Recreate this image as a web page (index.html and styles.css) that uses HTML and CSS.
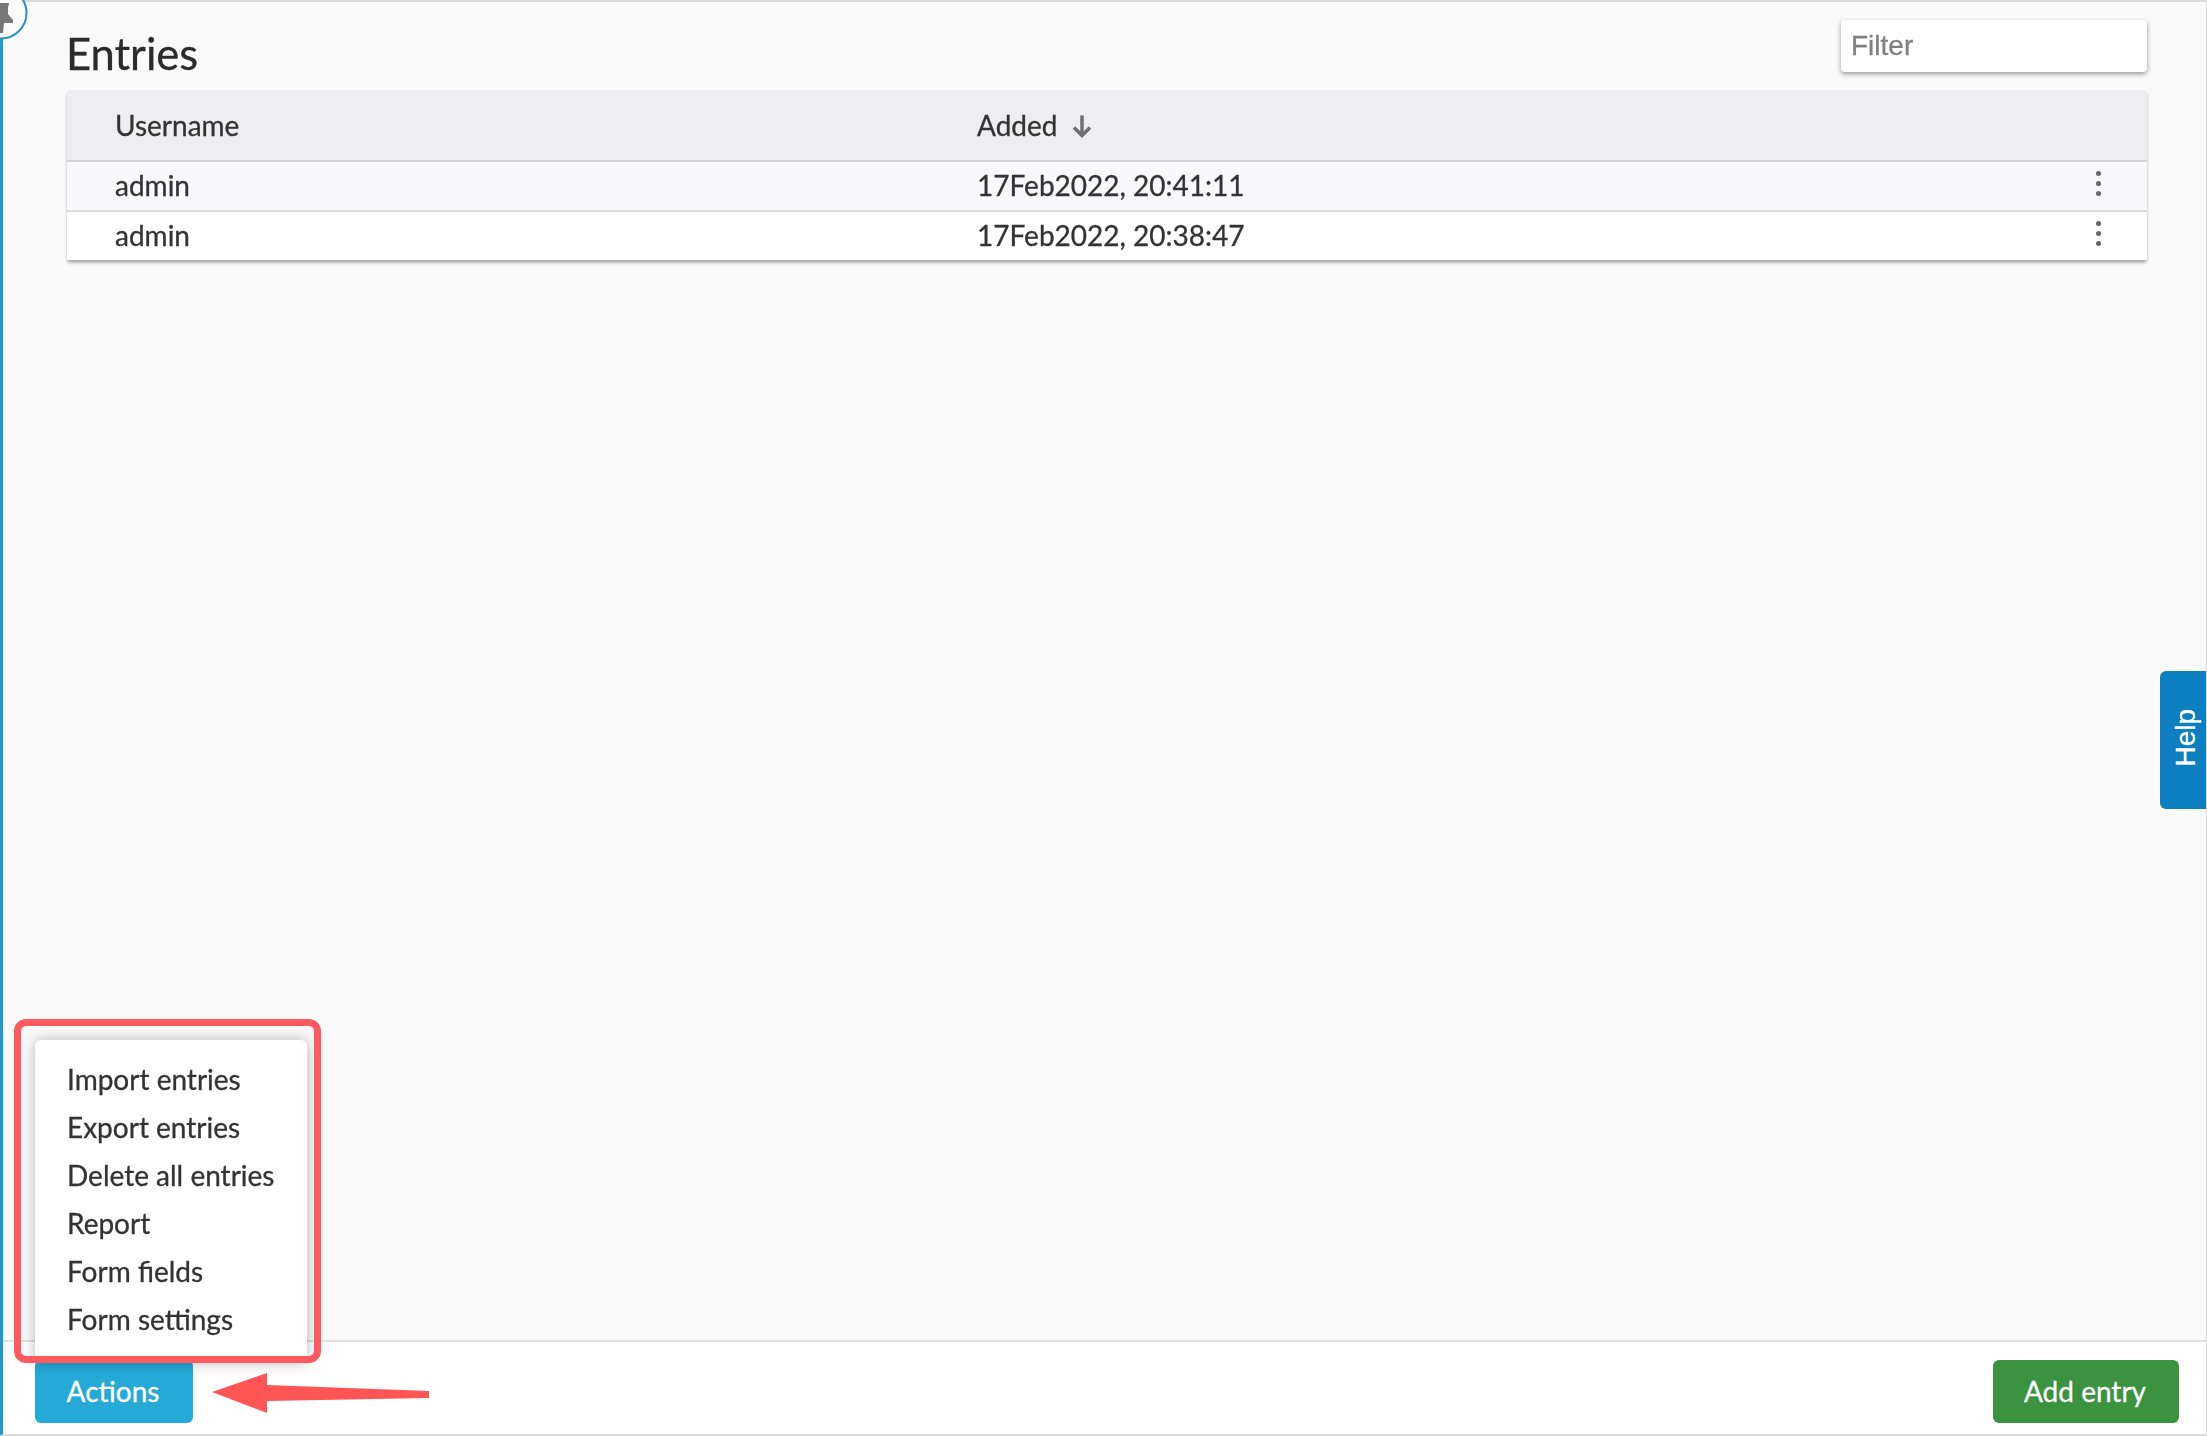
FILE: index.html
```html
<!DOCTYPE html>
<html lang="en">
<head>
<meta charset="utf-8">
<title>Entries</title>
<link rel="stylesheet" href="styles.css">
</head>
<body>
<div class="app">
  <main class="content">
    <header class="head">
      <h1 class="title">Entries</h1>
      <input class="filter" type="text" placeholder="Filter">
    </header>
    <section class="table">
      <div class="row row-head">
        <span>Username</span>
        <span class="sorted">Added
          <svg class="sort" viewBox="0 0 22 24" width="22" height="24" aria-hidden="true"><path d="M11 1.500V21M3 13.500L11 21.500L19 13.500" fill="none" stroke="#6f6f6f" stroke-width="3.500"/></svg>
        </span>
        <span></span>
      </div>
      <div class="row row-odd">
        <span>admin</span>
        <span>17Feb2022, 20:41:11</span>
        <span class="kebab"><i></i><i></i><i></i></span>
      </div>
      <div class="row row-even">
        <span>admin</span>
        <span>17Feb2022, 20:38:47</span>
        <span class="kebab"><i></i><i></i><i></i></span>
      </div>
    </section>
  </main>
  <footer class="foot">
    <div class="actions">
      <button class="btn btn-blue" type="button">Actions</button>
      <ul class="menu">
        <li>Import entries</li>
        <li>Export entries</li>
        <li>Delete all entries</li>
        <li>Report</li>
        <li>Form fields</li>
        <li>Form settings</li>
      </ul>
    </div>
    <button class="btn btn-green" type="button">Add entry</button>
  </footer>
</div>
<svg class="pin" viewBox="0 0 30 42" width="30" height="42" aria-hidden="true">
  <circle cx="1" cy="13" r="25.500" fill="#fbfbfb" stroke="#2a8fc6" stroke-width="2"/>
  <path d="M0 3H9L8 8L8 14L13 20V23H4L3 33H0Z" fill="#787878"/>
</svg>
<button class="help" type="button"><span>Help</span></button>
<div class="callout"></div>
<svg class="arrow" viewBox="0 0 230 44" width="230" height="44" aria-hidden="true">
  <path d="M2 21L57 2V14L219 20V27L57 30V42Z" fill="#ff5555"/>
</svg>
</body>
</html>
```
FILE: styles.css
```css
* { box-sizing: border-box; }
html, body { margin: 0; padding: 0; height: 100%; }
body {
  width: 2207px;
  height: 1436px;
  overflow: hidden;
  position: relative;
  background: #fafafa;
  font-family: Lato, "Liberation Sans", sans-serif;
  color: #333;
  -webkit-text-stroke: .3px;
}
.app, .pin, .help, .callout, .arrow { filter: blur(.5px); }
.app {
  height: 1436px;
  display: flex;
  flex-direction: column;
  border-top: 2px solid #dcdcdc;
  border-left: 3px solid #1f9ad0;
  border-right: 1px solid #dcdcdc;
  border-bottom: 2px solid #dcdcdc;
}
.content {
  flex: 1;
  padding: 18px 59px 0 64px;
}
.head {
  display: flex;
  justify-content: space-between;
  align-items: flex-start;
  height: 70px;
}
.title {
  margin: 7px 0 0 -1px;
  font-size: 43.500px;
  line-height: 52px;
  font-weight: 400;
  color: #2b2b2b;
}
.filter {
  width: 306px;
  height: 52px;
  padding: 0 10px;
  border: 0;
  border-radius: 4px;
  background: #fff;
  box-shadow: 0 2px 5px rgba(0, 0, 0, .4);
  font-family: "Liberation Sans", Arial, sans-serif;
  font-size: 28px;
}
.filter::placeholder { color: #808080; opacity: 1; }
.table {
  border-radius: 3px;
  box-shadow: 0 3px 3px rgba(0, 0, 0, .3);
}
.row {
  display: grid;
  grid-template-columns: 862px 1fr 52px;
  align-items: center;
  padding-left: 48px;
  font-size: 28px;
  height: 50px;
  border-bottom: 2px solid #dcdcde;
}
.row span:not(.kebab) { position: relative; top: -1px; }
.row-head {
  height: 72px;
  background: #eeeef2;
  border-radius: 3px 3px 0 0;
  border-bottom: 2px solid #d4d4d6;
}
.row-head span:not(.kebab) { top: 0; }
.row-odd { background: #f9f9fb; }
.row-even { background: #fff; border-bottom: 0; height: 48px; }
.sorted { display: flex; align-items: center; gap: 14px; }
.sort { margin-top: 2px; }
.kebab {
  display: flex;
  flex-direction: column;
  align-items: center;
  gap: 5px;
  width: 6px;
  margin-top: -5px;
}
.kebab i {
  width: 5px;
  height: 5px;
  border-radius: 50%;
  background: #666;
}
.foot {
  height: 94px;
  display: flex;
  justify-content: space-between;
  align-items: flex-start;
  padding: 18px 27px 0 32px;
  background: #fff;
  border-top: 2px solid #e0e0e0;
}
.actions { position: relative; }
.btn {
  height: 63px;
  padding: 0 2px 2px 0;
  border: 0;
  border-radius: 6px;
  color: #fff;
  font-family: inherit;
  font-size: 28px;
  -webkit-text-stroke: .3px #fff;
}
.btn-blue { width: 158px; background: #25a9d6; }
.btn-green { width: 186px; background: #3b923f; }
.menu {
  position: absolute;
  left: 0;
  bottom: 60px;
  width: 272px;
  margin: 0;
  padding: 15px 0 20px 32px;
  list-style: none;
  background: #fff;
  border-radius: 6px 6px 0 0;
  box-shadow: 0 0 14px rgba(0, 0, 0, .28);
  font-size: 28px;
  line-height: 48px;
}
.pin { position: absolute; left: 0; top: 0; }
.help {
  position: absolute;
  left: 2160px;
  top: 671px;
  width: 46px;
  height: 138px;
  padding: 12px 0 0 5px;
  border: 0;
  border-radius: 6px 0 0 6px;
  background: #0b7fbf;
  color: #fff;
  font-family: "Liberation Sans", Arial, sans-serif;
  font-size: 28px;
  -webkit-text-stroke: .4px #fff;
}
.help span {
  display: block;
  transform: rotate(-90deg);
}
.callout {
  position: absolute;
  left: 14px;
  top: 1019px;
  width: 307px;
  height: 344px;
  border: 7px solid #ff5a5f;
  border-radius: 12px;
}
.arrow { position: absolute; left: 210px; top: 1371px; }
```
